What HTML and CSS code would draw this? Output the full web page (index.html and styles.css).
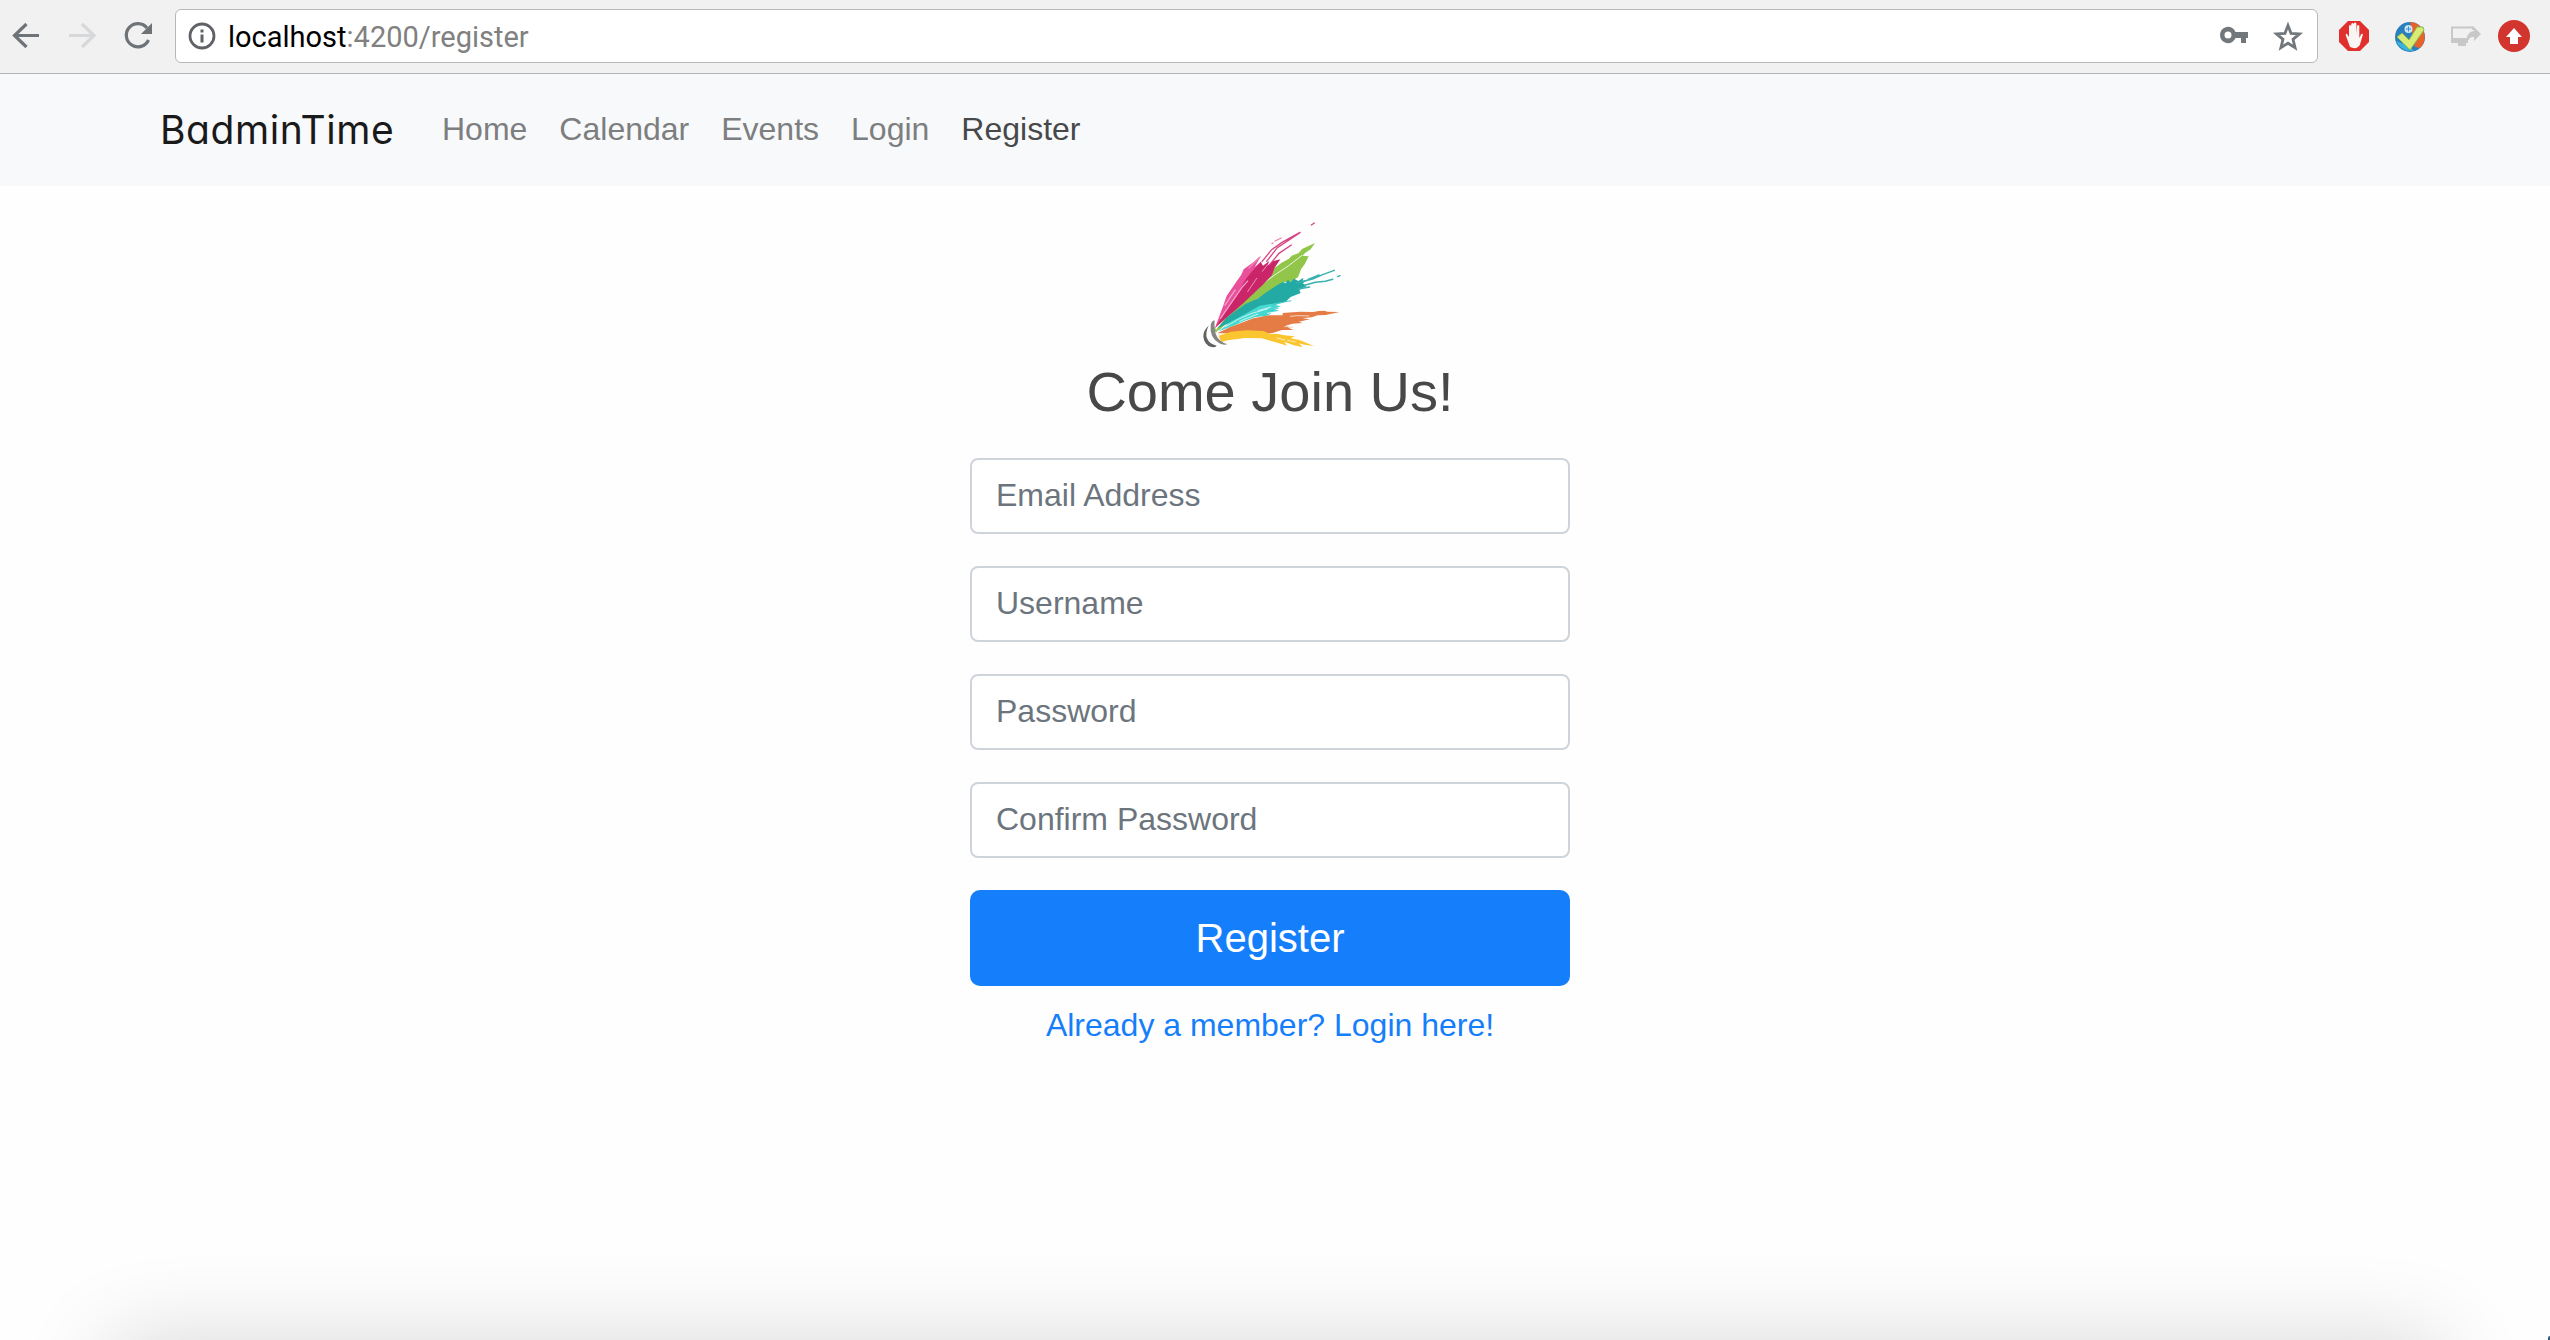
FILE: index.html
```html
<!DOCTYPE html>
<html lang="en">
<head>
<meta charset="utf-8">
<title>BadminTime</title>
<link rel="stylesheet" href="styles.css">
</head>
<body>
<header class="toolbar">
  <div class="controls">
    <svg viewBox="0 0 175 73" width="175" height="73" fill="none" stroke="#6e7378" stroke-width="3.2">
      <path d="M39 35.500H15M26.500 24 14.500 35.500l12 11.500"/>
      <path stroke="#d6d8da" d="M69 35.500h24M82 24l12 11.500L82 47"/>
      <path d="M148.500 40A11.600 11.600 0 1 1 147 28"/>
      <path d="M152 23v11h-11z" fill="#6e7378" stroke="none"/>
    </svg>
  </div>
  <div class="address">
    <svg class="info" viewBox="0 0 28 28" width="28" height="28"><circle cx="14" cy="14" r="12" fill="none" stroke="#5f6368" stroke-width="2.800"/><path d="M12.500 7.500h3v3h-3zm0 5h3v8h-3z" fill="#5f6368"/></svg>
    <span class="url"><b>localhost</b>:4200/register</span>
    <svg class="marks" viewBox="0 0 100 50" width="100" height="50">
      <path fill="#72777b" fill-rule="evenodd" d="M3 24a8 8 0 0 1 15.500-3H31v6h-2v5h-5v-5h-5.500A8 8 0 0 1 3 24zm4.500 0a3.500 3.500 0 1 0 7 0 3.500 3.500 0 0 0-7 0z"/>
      <path fill="none" stroke="#72777b" stroke-width="2.800" d="m71 14.500 3 7.800 8.500.6-6.500 5.400 2.100 8.400L71 32.200l-7.100 4.500 2.100-8.400-6.500-5.400 8.500-.6z"/>
    </svg>
  </div>
  <svg class="extensions" viewBox="0 0 232 73" width="232" height="73">
    <path d="M30 21h12l9 9v12l-9 9H30l-9-9V30z" fill="#e02f2c"/>
    <path d="M32 47l-4-11q-1-3 1-2l2 3V26q1-2 2.200 0v8V24q1.300-2 2.600 0v10V23.500q1.300-2 2.600 0V34l.6-8q1.500-2 2.300 0v12l2-4q2-1 1.500 1l-3 10q-3 5-9.800 2z" fill="#f8f5f3"/>
    <circle cx="92" cy="37" r="15" fill="#287fbe"/>
    <path d="M92 22a15 15 0 0 1 10 26l-5-1z" fill="#e8632c"/>
    <path d="M78 41q5 11 18 10l-5-5z" fill="#38b5df"/>
    <circle cx="90.500" cy="29" r="4" fill="#c9e5f8"/><path d="M90.500 26.500v5m-2.500-2.500h5" stroke="#3990d2"/>
    <path d="m79 37 5-4 7 7 8-13h6l1 3-14 20z" fill="#d8eb76" stroke="#8fb84c"/>
    <path d="M155 30v-2.500h-21V39h17" fill="none" stroke="#c8c8c8" stroke-width="2"/>
    <path d="M133 38h17v5h-2v3h-8v-3h-7z" fill="#c8c8c8"/>
    <path d="M148 42q1-11 8-11v-4l7 7-7 7v-4q-5 0-8 5z" fill="#c8c8c8"/>
    <circle cx="196" cy="36" r="16" fill="#d1352d"/><path d="m196 28 8 9h-4v7h-8v-7h-4z" fill="#fff"/>
  </svg>
</header>
<nav class="navbar">
  <a class="brand">BadminTime</a>
  <a>Home</a><a>Calendar</a><a>Events</a><a>Login</a><a class="active">Register</a>
</nav>
<main class="register">
  <svg class="logo" viewBox="0 0 480 435" width="160" height="145">
    <path fill="#91c64b" d="M76 362 130 292 205 222 232 190 275 158 297 146 305 137 326 129 336 117 375 99 362 118 346 128 337 137 356 139 345 161 333 178 324 202 302 215 282 217 248 240 195 271 140 311 88 360z"/>
    <path fill="none" stroke="#fefefe" stroke-width="2.500" d="m210 226 50-35 36-24 40-31M150 280l59-48"/>
    <path fill="#e94f9b" d="M74 356 98 292 110 258 137 218 154 194 161 178 188 158 213 138 194 171 209 158 194 192 150 256 104 326z"/>
    <path fill="#c92568" d="M78 350 113 293 145 246 170 203 198 171 212 155 219 167 238 153 232 167 248 154 271 148 253 175 246 195 217 226 158 281z"/>
    <path fill="none" stroke="#f6a1c9" stroke-width="4" d="m91 326 65-94 18-20M104 287l32-48"/>
    <g fill="none" stroke="#d64583" stroke-linecap="round">
      <path stroke-width="4" d="m216 155 29-36 31-22 54-30M230 154l32-41 68-45M239 164l28-34 37-25M364 45l9-6"/>
      <path stroke="#ef83b3" stroke-width="4" d="m255 93 19-9M246 101l3-2M177 174l32-32"/>
      <path stroke="#f1a7c7" stroke-width="2.500" d="m173 245 27-40M217 184l16-20"/>
    </g>
    <path fill="#24aaa5" d="M83 355 110 323 140 300 168 281 205 265 230 246 266 223 279 216 287 220 293 210 302 216 312 206 325 213 340 203 338 212 354 209 338 220 350 228 328 240 332 249 302 261 287 275 260 281 222 290 172 314z"/>
    <path fill="none" stroke="#39b1ae" stroke-width="4.500" stroke-linecap="round" d="m321 219 49-13 28-12 35-13M344 226l32-9 30-3 22-6M354 208l33-13M443 200l7-3M325 237l34-6"/>
    <path fill="#47d9d1" d="M86 364 122 335 167 311 209 287 248 281 275 276 257 285 273 289 251 297 268 302 230 309 240 316 195 322 162 333 129 348z"/>
    <path fill="none" stroke="#def9f6" stroke-width="2.500" d="m105 351 43-25 38-16 49-14M148 334l56-22M204 302l39-11"/>
    <path fill="none" stroke="#44ccc7" stroke-width="3" d="m247 285 40-10 17-3M234 304l31-10M218 319l24-9"/>
    <path fill="#e57b45" d="M82 370 119 352 155 338 190 325 239 316 278 316 278 309 330 305 370 306 386 303 403 302 412 305 449 306 407 315 383 316 365 322 337 325 360 328 326 335 338 339 307 341 287 347 312 352 292 352 310 360 276 360 248 369 190 376 142 370z"/>
    <path fill="none" stroke="#fefefe" stroke-width="2" d="m300 319 22-2 36 1M283 350l23-1"/>
    <path fill="#fac52f" d="M86 377 122 365 170 361 220 363 242 372 262 371 283 376 314 379 302 385 328 390 372 408 344 404 327 400 338 412 309 405 283 395 291 407 265 399 236 391 215 385 165 384 113 391 94 396z"/>
    <path fill="none" stroke="#fefefe" stroke-width="2" d="m261 384 24 6M292 391l25 5"/>
    <path fill="#85c550" d="m73 350 7 12 6-4-7 9-8-3z"/>
    <path fill="#626262" d="M56 347q-11 21-5 38 7 18 29 22-4 6-16 4-22-7-24-31 0-20 16-33z"/>
    <path fill="#858585" d="M74 331q-3 32 7 49 9 15 31 23-12 4-24-3-30-16-26-54 2-13 12-15z"/>
  </svg>
  <h1>Come Join Us!</h1>
  <form>
    <input type="email" placeholder="Email Address">
    <input type="text" placeholder="Username">
    <input type="password" placeholder="Password">
    <input type="password" placeholder="Confirm Password">
    <button type="button">Register</button>
  </form>
  <a class="login">Already a member? Login here!</a>
</main>
<div class="shade"></div>
</body>
</html>
```
FILE: styles.css
```css
* { box-sizing: border-box; }
body { margin: 0; height: 1340px; overflow: hidden; position: relative; background: #fefefe; font: 32px/48px "Liberation Sans", Arial, sans-serif; }
svg { display: block; flex: none; }
.toolbar { height: 74px; display: flex; align-items: flex-start; background: #f1f1f1; border-bottom: 1px solid #b5b5b5; }
.address { flex: 1; height: 54px; margin-top: 9px; padding: 0 0 0 12px; display: flex; align-items: center; background: #fff; border: 1px solid #b8b8b8; border-radius: 6px; }
.url { flex: 1; margin-left: 12px; padding-top: 2px; font: 29px/52px Roboto, sans-serif; color: #808080; }
.url b { font-weight: 400; color: #000; }
.navbar { height: 112px; padding: 0 0 2px 160px; display: flex; align-items: center; gap: 32px; background: #f8f9fb; color: #7d7e7f; }
.brand { width: 234px; margin-right: 16px; padding-top: 2px; font: 39px/50px Inter, sans-serif; font-feature-settings: "cv11"; letter-spacing: .55px; white-space: nowrap; color: #1a1a1b; }
.active { color: #474849; }
.register { width: 600px; margin: 24px 0 0 970px; display: flex; flex-direction: column; align-items: center; }
h1 { margin: 3px 0 32px; font-size: 56px; line-height: 68px; font-weight: 400; color: #484848; }
form { width: 100%; display: flex; flex-direction: column; gap: 32px; }
input { width: 100%; height: 76px; padding: 0 24px 2px; border: 2px solid #ced4da; border-radius: 8px; background: #fff; font: inherit; }
input::placeholder { color: #6c757d; opacity: 1; }
button { height: 96px; padding: 0; border: 0; border-radius: 10px; background: #157efb; color: #fff; font: inherit; font-size: 40px; }
.login { margin-top: 15px; color: #157efb; }
.shade { position: absolute; left: 0; right: 0; bottom: 0; height: 120px; overflow: hidden; }
.shade::before { content: ""; position: absolute; left: 110px; right: 110px; top: 121px; height: 200px; border-radius: 10px; box-shadow: 0 0 90px rgba(0,0,0,.16); }
.shade::after { content: ""; position: absolute; right: 0; bottom: 0; width: 2px; height: 4px; background: #31597a; border-radius: 2px 0 0; }
```
